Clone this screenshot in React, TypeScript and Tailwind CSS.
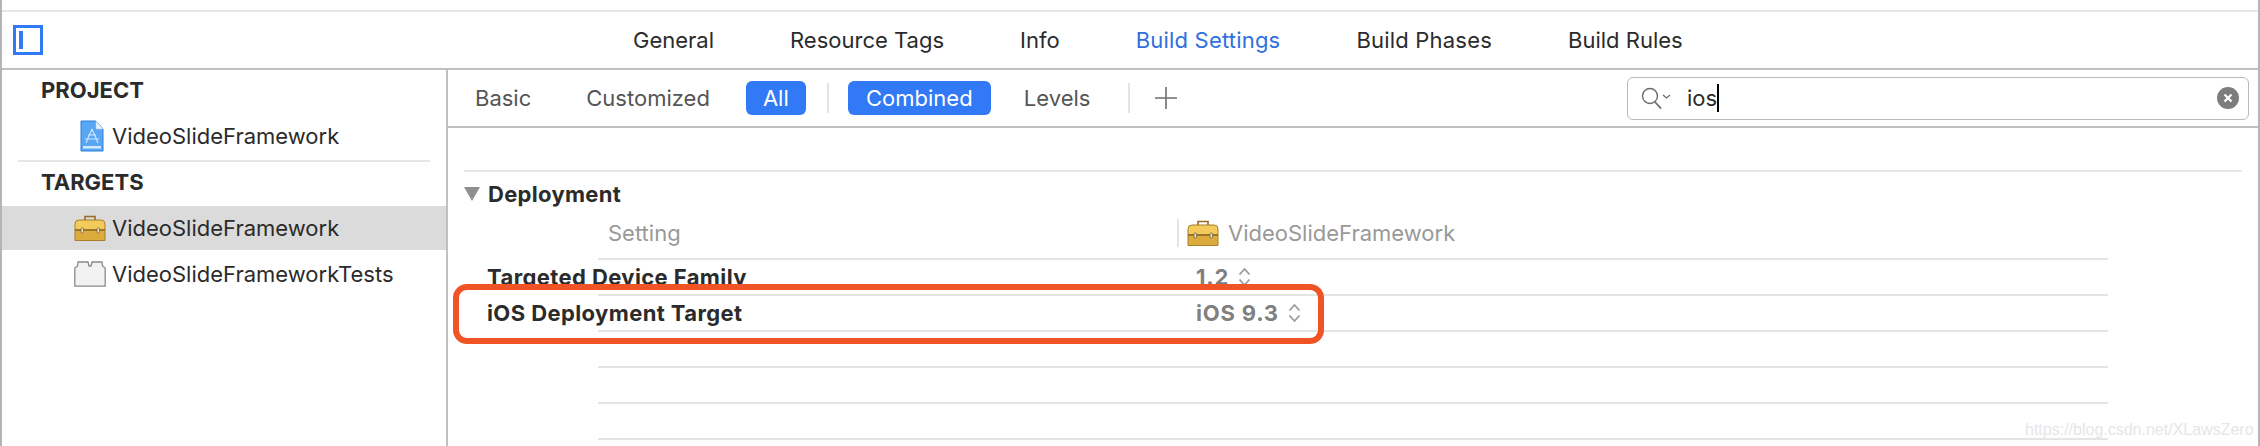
const FONT = "font-['Inter','Liberation_Sans',sans-serif]";

function ToolboxIcon() {
  return (
    <svg width="32" height="28" viewBox="0 0 32 28" className="shrink-0">
      <path d="M11 6V2.500h10V6" fill="none" stroke="#9a6a2c" strokeWidth="1.600" />
      <path d="M1 10q0-4 4-4h22q4 0 4 4v6H1z" fill="#f3cb5c" stroke="#a87f2a" strokeWidth="1" />
      <path d="M1 16h30v10.500H1z" fill="#dcab3e" stroke="#a87f2a" strokeWidth="1" />
      <path d="M1 16h30" stroke="#8f6a22" strokeWidth="1.400" />
      <rect x="7" y="14" width="2.600" height="5" rx="1" fill="#e6e0d0" stroke="#6b5a30" strokeWidth="0.700" />
      <rect x="23" y="14" width="2.600" height="5" rx="1" fill="#e6e0d0" stroke="#6b5a30" strokeWidth="0.700" />
    </svg>
  );
}

function ProjectIcon() {
  return (
    <svg width="24" height="32" viewBox="0 0 24 32" className="shrink-0">
      <path d="M1 1h15l7 8v22H1z" fill="#58a6f4" stroke="#2d7fd6" strokeWidth="1" />
      <path d="M16 1l7 8h-7z" fill="#eef5fc" stroke="#a8c8ea" strokeWidth="0.600" />
      <path d="M12 9l-6 14M12 9l6 14M5 19h14M8 15h8" stroke="#d4e8fc" strokeWidth="1.100" fill="none" />
      <path d="M3 26h18v2.500H3z" fill="#d4e8fc" />
    </svg>
  );
}

function BundleIcon() {
  return (
    <svg width="32" height="26" viewBox="0 0 32 26" className="shrink-0">
      <path d="M.8 25.200V7L3.500 5 4 1h10l1 4h2l1-4h10l.5 4 2.700 2v18.200z" fill="#f2f2f2" stroke="#8a8a8a" strokeWidth="1.300" />
    </svg>
  );
}

function Stepper() {
  return (
    <svg width="13" height="20" viewBox="0 0 13 20" className="shrink-0">
      <path d="M1.500 7.500L6.500 2l5 5.500M1.500 12.500l5 5.500 5-5.500" fill="none" stroke="#9a9a9a" strokeWidth="1.800" />
    </svg>
  );
}

function SidebarRow({ icon, label, selected, iconBox }: { icon: React.ReactNode; label: string; selected?: boolean; iconBox?: string }) {
  return (
    <div className={`flex h-[44px] items-center ${selected ? "bg-[#dbdbdb]" : ""}`}>
      <div className={`flex w-[110px] justify-end ${iconBox ?? "pr-[6px]"}`}>{icon}</div>
      <span className="text-[22px] text-[#2b2b2b]">{label}</span>
    </div>
  );
}

function SettingRow({ label, value }: { label?: string; value?: string }) {
  return (
    <div className="ml-[150px] flex h-[36px] w-[1510px] items-center border-b-2 border-[#e4e4e4]">
      {label && <span className="-ml-[111px] w-[709px] shrink-0 text-[22px] font-bold tracking-[0.4px] text-[#2b2b2b]">{label}</span>}
      {value && (
        <div className="flex items-center gap-[9px]">
          <span className="text-[22px] font-bold tracking-[0.8px] text-[#808080]">{value}</span>
          <Stepper />
        </div>
      )}
    </div>
  );
}

export default function App() {
  const tabs = ["General", "Resource Tags", "Info", "Build Settings", "Build Phases", "Build Rules"];

  return (
    <div className={`${FONT} relative h-[446px] w-[2260px] overflow-hidden border-x-2 border-[#b5b5b5] bg-white`}>
      <div className="h-[12px] border-b-2 border-[#e6e6e6]" />

      {/* Header */}
      <header className="flex h-[58px] items-center border-b-2 border-[#c0c0c0]">
        <div className="ml-[11px] flex h-[30px] w-[30px] border-[3px] border-[#3179f5] py-[3px] pl-[3px]">
          <div className="w-[4px] bg-[#3179f5]" />
        </div>
        <nav className="ml-[590px] flex gap-[76px] text-[22px] text-[#2b2b2b]">
          {tabs.map((tab) => (
            <span
              key={tab}
              className={tab === "Build Settings" ? "tracking-[0.2px] text-[#2f6fde]" : tab === "Build Phases" ? "tracking-[0.2px]" : ""}
            >
              {tab}
            </span>
          ))}
        </nav>
      </header>

      <div className="flex h-[376px]">
        {/* Sidebar */}
        <aside className="w-[446px] shrink-0 border-r-2 border-[#c0c0c0]">
          <h2 className="ml-[39px] flex h-[40px] items-center text-[22px] font-bold text-[#2b2b2b]">PROJECT</h2>
          <div className="pt-[4px]">
            <SidebarRow icon={<ProjectIcon />} label="VideoSlideFramework" iconBox="pr-[8px]" />
          </div>
          <div className="mx-[16px] mt-[2px] h-[2px] bg-[#e6e6e6]" />
          <h2 className="ml-[39px] flex h-[44px] items-center pb-[4px] text-[22px] font-bold text-[#2b2b2b]">TARGETS</h2>
          <SidebarRow icon={<ToolboxIcon />} label="VideoSlideFramework" selected />
          <div className="pt-[2px]">
            <SidebarRow icon={<BundleIcon />} label="VideoSlideFrameworkTests" />
          </div>
        </aside>

        {/* Editor */}
        <main className="min-w-0 flex-1">
          <div className="flex h-[58px] items-center border-b-2 border-[#c0c0c0] text-[22px] text-[#555555]">
            <span className="ml-[27px]">Basic</span>
            <span className="ml-[55px]">Customized</span>
            <span className="ml-[36px] flex h-[34px] w-[60px] items-center justify-center rounded-[6px] bg-[#3179f5] text-white">All</span>
            <div className="ml-[21px] mr-[19px] h-[30px] w-[2px] bg-[#e4e4e4]" />
            <span className="flex h-[34px] w-[143px] items-center justify-center rounded-[6px] bg-[#3179f5] text-white">Combined</span>
            <span className="ml-[33px]">Levels</span>
            <div className="ml-[38px] h-[30px] w-[2px] bg-[#e4e4e4]" />
            <svg width="22" height="22" viewBox="0 0 22 22" className="ml-[25px]">
              <path d="M11 0v22M0 11h22" stroke="#6e6e6e" strokeWidth="1.600" />
            </svg>
            <div className="ml-auto mr-[9px] flex h-[43px] w-[622px] items-center rounded-[6px] border border-[#b9b9b9] pl-[13px] pr-[9px]">
              <svg width="31" height="22" viewBox="0 0 31 22" className="shrink-0">
                <circle cx="9" cy="9" r="7.500" fill="none" stroke="#6b6b6b" strokeWidth="1.400" />
                <path d="M14 15l6 6.500" stroke="#6b6b6b" strokeWidth="1.800" />
                <path d="M22 8l3.500 3L29 8" fill="none" stroke="#6b6b6b" strokeWidth="1.300" />
              </svg>
              <span className="ml-[15px] text-[22px] text-[#2b2b2b]">ios</span>
              <div className="h-[28px] w-[2px] bg-black" />
              <div className="ml-auto flex h-[22px] w-[22px] items-center justify-center rounded-full bg-[#7d7d7d]">
                <svg width="10" height="10" viewBox="0 0 10 10">
                  <path d="M1.500 1.500l7 7M8.500 1.500l-7 7" stroke="#fff" strokeWidth="2.200" />
                </svg>
              </div>
            </div>
          </div>

          <div className="ml-[16px] h-[44px] w-[1778px] border-b-2 border-[#e6e6e6]" />

          {/* Deployment group */}
          <div className="ml-[16px] flex h-[44px] items-center">
            <svg width="16" height="14" viewBox="0 0 16 14">
              <path d="M0 0h16L8 14z" fill="#8f8f8f" />
            </svg>
            <span className="ml-[8px] text-[22px] font-bold tracking-[0.3px] text-[#2b2b2b]">Deployment</span>
          </div>

          <div className="ml-[150px] flex h-[44px] w-[1510px] items-center border-b-2 border-[#e4e4e4] pb-[8px] text-[22px] text-[#999999]">
            <span className="ml-[10px] w-[569px] shrink-0">Setting</span>
            <div className="h-[28px] w-[2px] bg-[#e4e4e4]" />
            <div className="ml-[8px]">
              <ToolboxIcon />
            </div>
            <span className="ml-[9px]">VideoSlideFramework</span>
          </div>

          <SettingRow label="Targeted Device Family" value="1.2" />
          <SettingRow label="iOS Deployment Target" value="iOS 9.3" />
          <SettingRow />
          <SettingRow />
          <SettingRow />
        </main>
      </div>

      {/* Red highlight annotation */}
      <div className="absolute left-[451px] top-[284px] h-[60px] w-[871px] rounded-[14px] border-[6px] border-[#f05426]" />

      {/* Watermark */}
      <span className="absolute left-[2023px] top-[418px] font-['Liberation_Sans',sans-serif] text-[16px] text-[#e6e6e6]">
        https://blog.csdn.net/XLawsZero
      </span>
    </div>
  );
}
